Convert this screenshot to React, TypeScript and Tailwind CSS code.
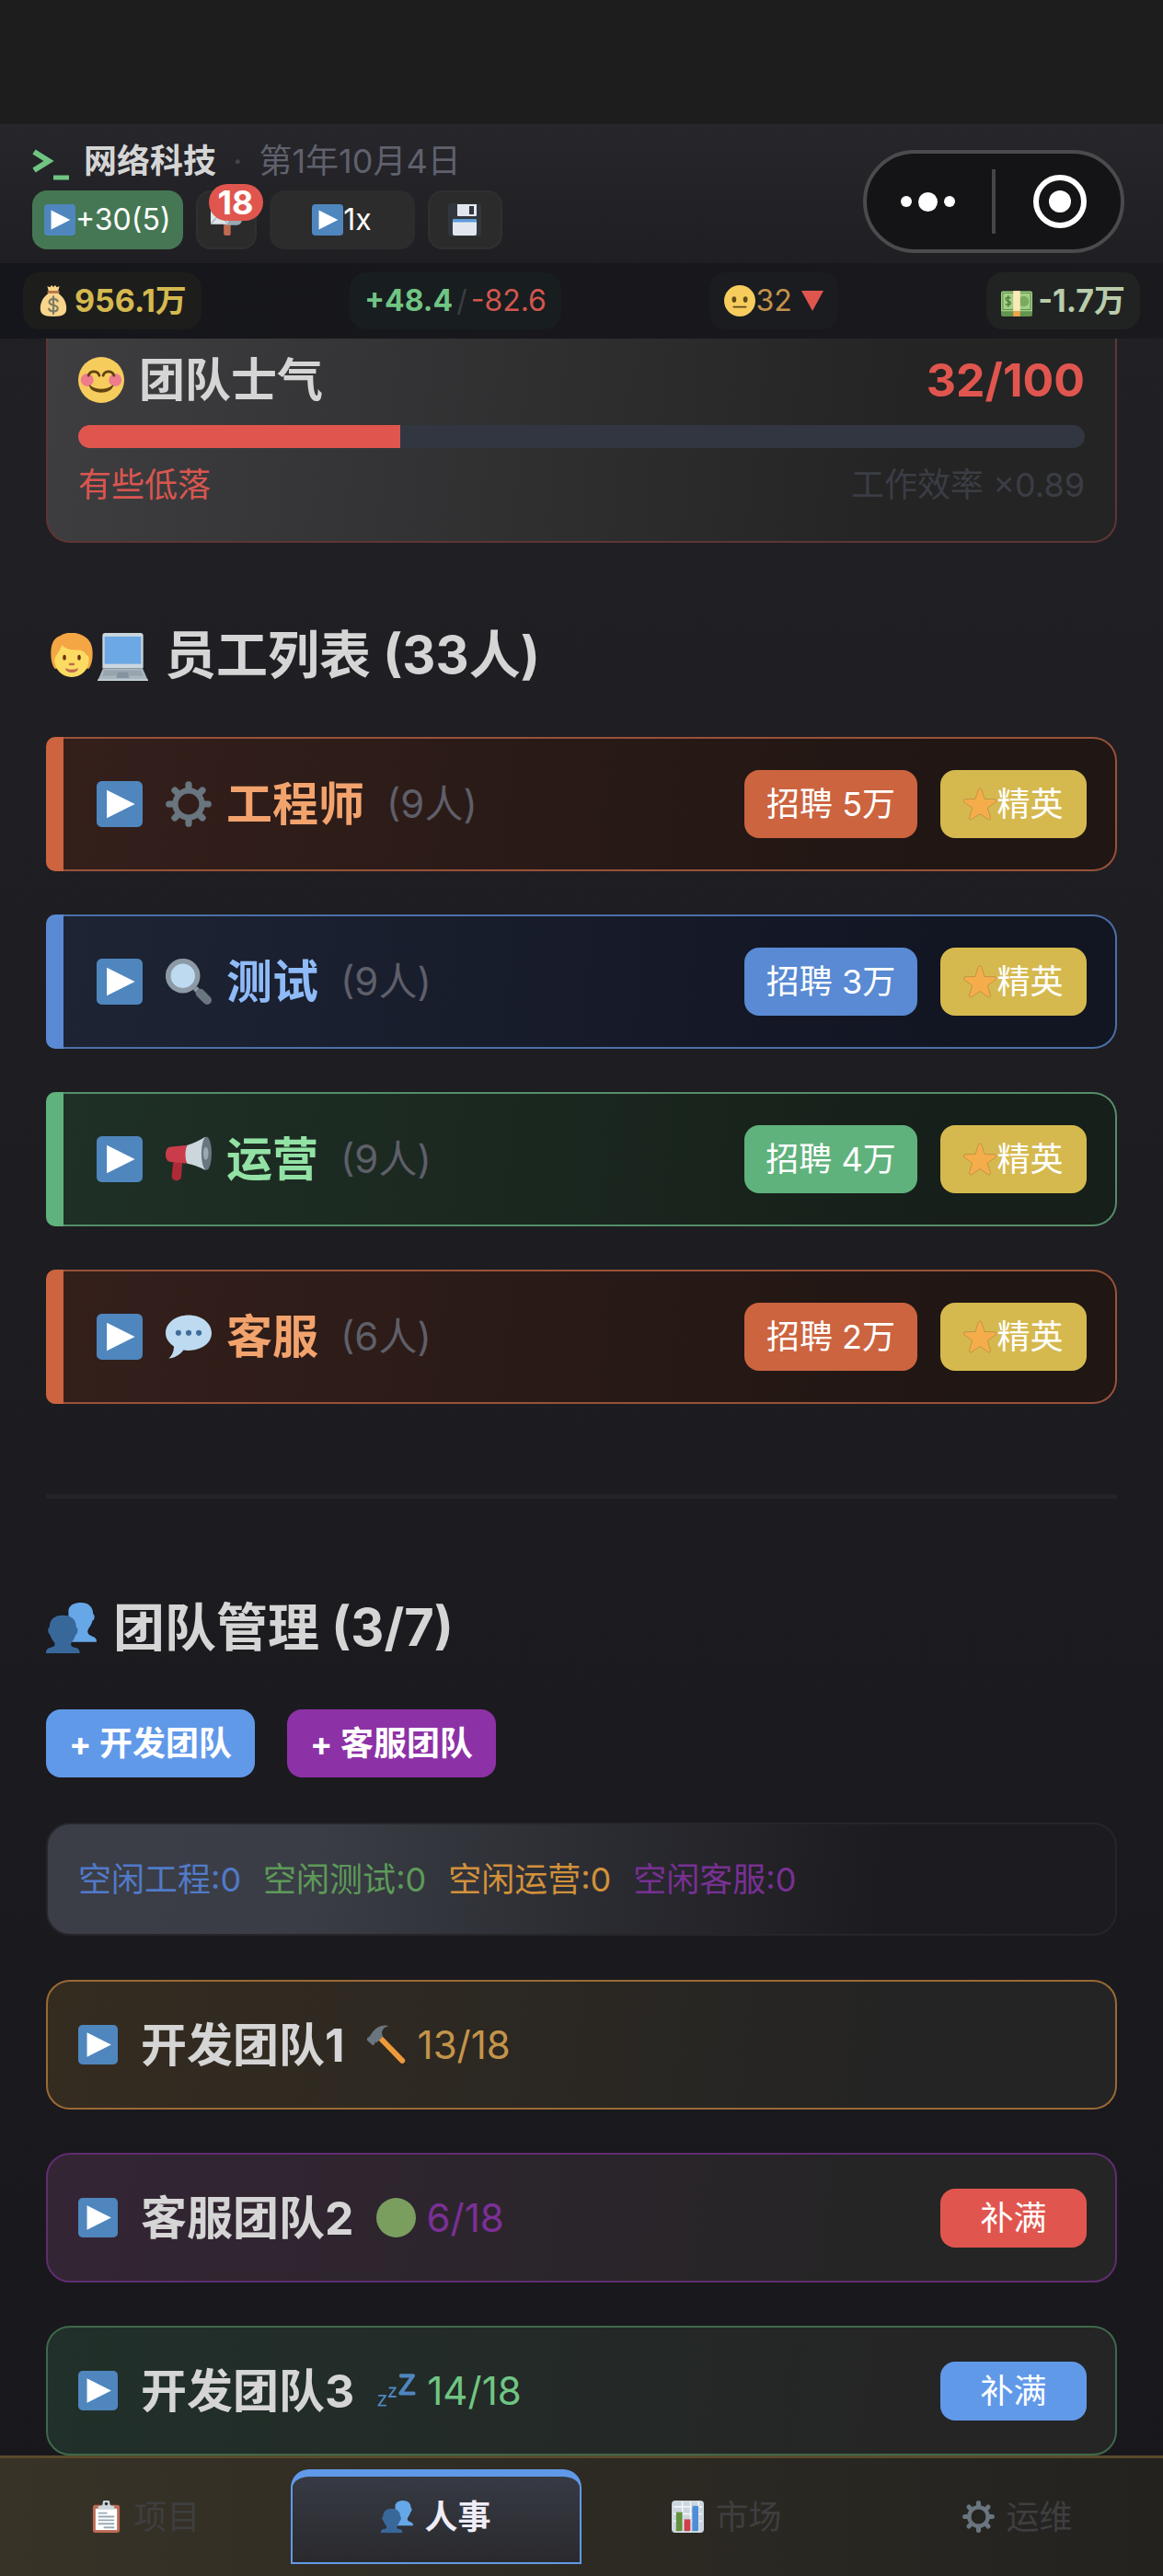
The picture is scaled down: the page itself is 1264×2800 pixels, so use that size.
import { useState } from "react";
import type { ReactNode } from "react";

type IconProps = { className?: string };

function Svg({ className, children }: { className?: string; children: ReactNode }) {
  return (
    <svg viewBox="0 0 36 36" aria-hidden="true" className={["shrink-0", className].join(" ")}>
      {children}
    </svg>
  );
}

function PlayIcon({ className }: IconProps) {
  return (
    <Svg className={className}>
      <rect width="36" height="36" rx="4" fill="#4f86be" />
      <path d="M8 7l22 11L8 29z" fill="#fff" />
    </Svg>
  );
}

function MailboxIcon({ className }: IconProps) {
  return (
    <Svg className={className}>
      <path d="M15 22h8v12a2 2 0 0 1-2 2h-4a2 2 0 0 1-2-2z" fill="#c1694f" />
      <rect x="14" y="8" width="22" height="16" rx="6" fill="#99aab5" />
      <rect x="0" y="7" width="20" height="16" rx="1" fill="#dfe4e8" />
      <path d="M0 8l10 9 10-9M0 23l7-8M20 23l-7-8" fill="none" stroke="#99aab5" strokeWidth="1.2" />
    </Svg>
  );
}

function FloppyIcon({ className }: IconProps) {
  return (
    <Svg className={className}>
      <path d="M4 0h28a4 4 0 0 1 4 4v28a4 4 0 0 1-4 4H4a4 4 0 0 1-4-4V4a4 4 0 0 1 4-4z" fill="#31373d" />
      <path d="M10 1h21v12a1 1 0 0 1-1 1H11a1 1 0 0 1-1-1z" fill="#e1e8ed" />
      <rect x="23" y="3" width="5" height="9" fill="#31373d" />
      <path d="M5 19a2 2 0 0 1 2-2h22a2 2 0 0 1 2 2v14a2 2 0 0 1-2 2H7a2 2 0 0 1-2-2z" fill="#e1e8ed" />
      <path d="M5 19a2 2 0 0 1 2-2h22a2 2 0 0 1 2 2v1.500H5z" fill="#5d9bdb" />
    </Svg>
  );
}

function MoneyBagIcon({ className }: IconProps) {
  return (
    <Svg className={className}>
      <path d="M11 1l3 1.500L16 0l2 2 2-2 2 2.500L25 1l-1.500 6h-11z" fill="#f9d58c" />
      <path d="M12 9.500C6 14 3 20 3 26.500 3 33 6 36 18 36s15-3 15-9.500C33 20 30 14 24 9.500z" fill="#f9d58c" />
      <rect x="11" y="6.500" width="14" height="3" rx="1.500" fill="#be7a4a" />
      <path
        d="M23 18.500c-1-2-3-2.700-5-2.700-2.700 0-4.700 1.400-4.700 3.500 0 5 9.700 2.400 9.700 7.200 0 2.200-2.100 3.700-5 3.700-2.500 0-4.500-1-5.200-3M18 13v20"
        fill="none"
        stroke="#7d7a63"
        strokeWidth="2.300"
        strokeLinecap="round"
      />
    </Svg>
  );
}

function NeutralFaceIcon({ className }: IconProps) {
  return (
    <Svg className={className}>
      <circle cx="18" cy="18" r="18" fill="#f6cc5d" />
      <ellipse cx="11.500" cy="16.500" rx="2.500" ry="3.500" fill="#5f4a17" />
      <ellipse cx="24.500" cy="16.500" rx="2.500" ry="3.500" fill="#5f4a17" />
      <path d="M11 25h14" stroke="#5f4a17" strokeWidth="2" strokeLinecap="round" />
    </Svg>
  );
}

function CashIcon({ className }: IconProps) {
  return (
    <Svg className={className}>
      <path d="M0 28h36v6a2 2 0 0 1-2 2H2a2 2 0 0 1-2-2z" fill="#639450" />
      <path d="M0 9a2 2 0 0 1 2-2h32a2 2 0 0 1 2 2v21H0z" fill="#a3cf86" />
      <path d="M2 9h32v19H2z" fill="none" stroke="#639450" strokeWidth="1.200" />
      <circle cx="26" cy="18.500" r="6" fill="#7aaa5c" />
      <path
        d="M11 15c-1-1.500-5.500-1.500-5.500 1 0 3 5.500 1.500 5.500 4.500 0 2.600-4.500 2.600-5.700 1M8.200 12v13"
        fill="none"
        stroke="#4f7d3c"
        strokeWidth="1.500"
      />
      <path d="M14 6.500h8V30h-8z" fill="#fbe9b8" />
      <path d="M14 30h8v6h-8z" fill="#f0a545" />
    </Svg>
  );
}

function BlushIcon({ className }: IconProps) {
  return (
    <Svg className={className}>
      <circle cx="18" cy="18" r="18" fill="#f6cc5d" />
      <circle cx="7" cy="18" r="5" fill="#ee7c8d" />
      <circle cx="29" cy="18" r="5" fill="#ee7c8d" />
      <path
        d="M8 14.500c1.500-4 7-4 8.500 0M19.500 14.500c1.500-4 7-4 8.500 0"
        fill="none"
        stroke="#5f4210"
        strokeWidth="2"
        strokeLinecap="round"
      />
      <path d="M9 22.500c4.500 4 13.500 4 18 0-2 6.500-16 6.500-18 0z" fill="#5f4210" stroke="#5f4210" strokeLinejoin="round" />
    </Svg>
  );
}

function PersonIcon({ className }: IconProps) {
  return (
    <Svg className={className}>
      <path d="M1 17C1 9 3 4 9 2c5-3 12-3 18 0 6 3 8 8 8 15 0 5-1 9-3 12H4c-2-3-3-7-3-12z" fill="#f4a645" />
      <path d="M4 22c0-3 4-6 6-12 4 4 9 4 14 4 3 0 5 2 6 4 2 0 2 3 2 4 0 8-6 14-14 14S4 30 4 22z" fill="#fbdb61" />
      <ellipse cx="12" cy="20" rx="1.300" ry="2.200" fill="#6a2d12" />
      <ellipse cx="24" cy="20" rx="1.300" ry="2.200" fill="#6a2d12" />
      <path d="M16.500 25.500h3" stroke="#c1694f" strokeWidth="1.800" strokeLinecap="round" />
      <path d="M13.500 29.500c2 1 7 1 9 0-1 3-8 3-9 0z" fill="#c1694f" stroke="#c1694f" />
    </Svg>
  );
}

function LaptopIcon({ className }: IconProps) {
  return (
    <Svg className={className}>
      <path d="M3.500 4a2 2 0 0 1 2-2h25a2 2 0 0 1 2 2v23h-29z" fill="#ccd6dd" />
      <rect x="5" y="4.500" width="26" height="19.500" fill="#6ca8e4" />
      <path d="M4 27h28l4 9H0z" fill="#aab6bf" />
      <path d="M0 35h36v1H0z" fill="#ccd6dd" />
      <path d="M5 28.500h26l1.500 4h-29z" fill="#98a5af" />
      <path d="M14.500 30h7l1 4h-9z" fill="#8593a0" />
    </Svg>
  );
}

const GEAR_ANGLES = [0, 45, 90, 135];

function GearIcon({ className }: IconProps) {
  return (
    <Svg className={className}>
      <circle cx="18" cy="18" r="10.500" fill="none" stroke="#69757f" strokeWidth="4.500" />
      {GEAR_ANGLES.map((angle) => (
        <path
          key={angle}
          d="M18 2.700V7M18 29v4.300"
          stroke="#69757f"
          strokeWidth="5.200"
          strokeLinecap="round"
          transform={`rotate(${angle} 18 18)`}
        />
      ))}
    </Svg>
  );
}

function MagnifierIcon({ className }: IconProps) {
  return (
    <Svg className={className}>
      <path d="M23 23l4 4" stroke="#8d9aa5" strokeWidth="4" />
      <path d="M27 27l5.500 5.500" stroke="#69757f" strokeWidth="7" strokeLinecap="round" />
      <circle cx="13.500" cy="13.500" r="11.500" fill="#bddaf0" stroke="#8d9aa5" strokeWidth="4" />
    </Svg>
  );
}

function MegaphoneIcon({ className }: IconProps) {
  return (
    <Svg className={className}>
      <path d="M6 20h7l-.700 11.500a3.800 3.800 0 0 1-7.500 0z" fill="#af2a39" />
      <path d="M3 8.500L17 7v14.500L3 20c-4-1-4-10.500 0-11.500z" fill="#cb3c4b" />
      <path d="M17 7c4-1 9-3.500 14-6.500v26C26 24 21 22 17 21.500c-2-3-2-11.500 0-14.500z" fill="#ccd6dd" />
      <ellipse cx="32" cy="13.500" rx="4" ry="13" fill="#69757f" />
      <ellipse cx="31.500" cy="13.500" rx="2" ry="5" fill="#99aab5" />
    </Svg>
  );
}

function SpeechIcon({ className }: IconProps) {
  return (
    <Svg className={className}>
      <path d="M18 1C8 1 0 7 0 15c0 4.500 2.500 8 6.500 10.500 0 4-1.500 7-4 9.500 4 0 9-3 11.500-6.500 13 1.500 22-5 22-13.500C36 7 28 1 18 1z" fill="#bddaf0" />
      <circle cx="10" cy="15" r="2.200" fill="#3f6c9b" />
      <circle cx="18" cy="15" r="2.200" fill="#3f6c9b" />
      <circle cx="26" cy="15" r="2.200" fill="#3f6c9b" />
    </Svg>
  );
}

function StarIcon({ className }: IconProps) {
  return (
    <Svg className={className}>
      <path
        d="M16.300 2c.6-1.500 2.800-1.500 3.400 0L23 12.500l11 .2c1.700.1 2.300 2.100 1 3.200l-8.700 6.300 3.200 10.500c.5 1.700-1.200 2.900-2.600 1.900L18 28.500l-8.900 6.100c-1.400 1-3.100-.2-2.600-1.900l3.200-10.500L1 15.900c-1.300-1.100-.7-3.100 1-3.200l11-.2z"
        fill="#f5ad4c"
        stroke="#a98139"
        strokeWidth="0.600"
      />
    </Svg>
  );
}

function PeopleIcon({ className }: IconProps) {
  return (
    <Svg className={className}>
      <path
        d="M25 0c5 0 8.500 3 8.500 8 1.300.5 1.500 4-.5 5-.5 2.500-2 4.500-3 6-1 2.500 0 4 3 5 2.500.8 3 2 3 4H16V5c1-3.500 4.500-5 9-5z"
        fill="#66a7e8"
      />
      <path
        d="M12 9c6 0 9.500 3 9.500 8.500 1.500.5 1.500 4.500-.5 5.500-.5 2.500-2 4-3 5.500-.7 2.500.5 3 3 3.500 2.500.5 3 2 3 4H0c0-2 .5-3.500 3-4s4-1 3-3.500c-1-1.500-2.500-3-3-5.500-2-1-2-5-.5-5.500C2.500 12 6 9 12 9z"
        fill="#38689a"
      />
    </Svg>
  );
}

function HammerIcon({ className }: IconProps) {
  return (
    <Svg className={className}>
      <path d="M13 13l19 19.500" stroke="#ee9a3b" strokeWidth="5" strokeLinecap="round" />
      <path d="M0 12c2-1 2.500-1.500 4-4 3-5 9-9 16-7-4 .5-6.500 3-6.500 6.500 0 1.500 1 2.500.5 3.500l-5 5c-1-.5-2-.5-2 1 0 1-1.500 2-2.500 1L0 14c-.5-.6-.5-1.500 0-2z" fill="#69757f" />
    </Svg>
  );
}

function GreenDotIcon({ className }: IconProps) {
  return (
    <Svg className={className}>
      <circle cx="18" cy="18" r="18" fill="#7a9e5e" />
    </Svg>
  );
}

function SleepIcon({ className }: IconProps) {
  return (
    <Svg className={className}>
      <g fill="none" stroke="#4f86be" strokeLinecap="round" strokeLinejoin="round">
        <path d="M22.500 4.500h11l-11.500 16h12" strokeWidth="3.400" />
        <path d="M12 15.500h5.500l-6 8h6" strokeWidth="1.600" />
        <path d="M2.500 22.500h6l-6.500 9h6.500" strokeWidth="1.600" />
      </g>
    </Svg>
  );
}

function ClipboardIcon({ className }: IconProps) {
  return (
    <Svg className={className}>
      <rect x="3" y="5" width="30" height="31" rx="2.500" fill="#bd6a52" />
      <rect x="6" y="9" width="24" height="24" fill="#fff" />
      <path d="M9 6c4 0 5-1 5-3a4 4 0 0 1 8 0c0 2 1 3 5 3v4H9z" fill="#ccd6dd" />
      <circle cx="18" cy="3.500" r="1.800" fill="#292f33" />
      <path d="M9 14h10M9 18h18M9 22h18M9 26h18M15 30h12" stroke="#99aab5" strokeWidth="2" />
    </Svg>
  );
}

function ChartIcon({ className }: IconProps) {
  return (
    <Svg className={className}>
      <rect width="36" height="36" rx="4" fill="#ccd6dd" />
      <path d="M2 7h32M2 15h32M2 23h32M12 1v34M21 1v34M30 1v34" stroke="#f5f8fa" strokeWidth="1.500" />
      <rect x="5" y="13" width="7" height="21" fill="#64913f" />
      <rect x="14" y="21" width="7" height="13" fill="#cf3f4c" />
      <rect x="23" y="6" width="7" height="28" fill="#4f8ed6" />
    </Svg>
  );
}

const GROUPS = [
  {
    name: "工程师",
    count: 9,
    cost: "5万",
    icon: GearIcon,
    bar: "bg-[#cb643f]",
    box: "border-[#98523a] bg-[linear-gradient(97deg,#341f1b,#201613_85%)]",
    text: "text-[#f2a36d]",
    button: "bg-[#cb643f]",
  },
  {
    name: "测试",
    count: 9,
    cost: "3万",
    icon: MagnifierIcon,
    bar: "bg-[#598ad3]",
    box: "border-[#4b70a8] bg-[linear-gradient(97deg,#1d2434,#121522_85%)]",
    text: "text-[#8fbaf8]",
    button: "bg-[#598ad3]",
  },
  {
    name: "运营",
    count: 9,
    cost: "4万",
    icon: MegaphoneIcon,
    bar: "bg-[#60b27d]",
    box: "border-[#558d69] bg-[linear-gradient(97deg,#1f3026,#161f19_85%)]",
    text: "text-[#92e2a5]",
    button: "bg-[#60b27d]",
  },
  {
    name: "客服",
    count: 6,
    cost: "2万",
    icon: SpeechIcon,
    bar: "bg-[#cb643f]",
    box: "border-[#98523a] bg-[linear-gradient(97deg,#341f1b,#201613_85%)]",
    text: "text-[#f2a36d]",
    button: "bg-[#cb643f]",
  },
];

const IDLE = [
  { label: "空闲工程", count: 0, color: "text-[#517ac8]" },
  { label: "空闲测试", count: 0, color: "text-[#5d9a59]" },
  { label: "空闲运营", count: 0, color: "text-[#d2913a]" },
  { label: "空闲客服", count: 0, color: "text-[#783093]" },
];

const TEAMS = [
  {
    name: "开发团队1",
    size: "13/18",
    icon: HammerIcon,
    box: "border-[#996a35] bg-[linear-gradient(97deg,#352c20,#242424_80%)]",
    text: "text-[#c4944a]",
    fill: "",
  },
  {
    name: "客服团队2",
    size: "6/18",
    icon: GreenDotIcon,
    box: "border-[#5f2d70] bg-[linear-gradient(97deg,#342535,#252525_80%)]",
    text: "text-[#7b3096]",
    fill: "bg-[#e0564f]",
  },
  {
    name: "开发团队3",
    size: "14/18",
    icon: SleepIcon,
    box: "border-[#3f694b] bg-[linear-gradient(97deg,#21302a,#252525_80%)]",
    text: "text-[#70c583]",
    fill: "bg-[#6199e9]",
  },
];

const TABS = [
  { label: "项目", icon: ClipboardIcon },
  { label: "人事", icon: PeopleIcon },
  { label: "市场", icon: ChartIcon },
  { label: "运维", icon: GearIcon },
];

const MORALE = 32;

export default function App() {
  const [tab, setTab] = useState("人事");

  return (
    <div className="flex min-h-screen flex-col bg-linear-to-b from-[#222126] to-[#18171b] font-['Inter','Noto_Sans_CJK_SC',sans-serif] text-[36px] leading-[48px] text-[#d5d5d5]">
      {/* Space under the phone's status bar */}
      <div className="h-[135px] bg-[#1d1d1d]" />

      <header className="flex items-end justify-between bg-linear-to-b from-[#26262b] to-[#1f1f23] pt-4 pr-[42px] pb-[11px] pl-[35px]">
        <div className="pb-1">
          <div className="flex items-center">
            <svg viewBox="0 0 42 42" className="mr-[14px] size-[42px]" aria-hidden="true">
              <path d="M2 11l16 10L2 31" fill="none" stroke="#70c583" strokeWidth="6" />
              <path d="M23 39h17" stroke="#70c583" strokeWidth="5" />
            </svg>
            <span className="font-bold">网络科技</span>
            <span className="mx-[18px] text-[#45464d]">·</span>
            <span className="text-[#60616d]">第1年10月4日</span>
          </div>
          <div className="mt-2 flex gap-[14px] text-[32px] text-white">
            <button className="flex h-16 items-center rounded-2xl bg-[#457754] px-[13px]">
              <PlayIcon className="size-[34px]" />
              +30(5)
            </button>
            <button
              aria-label="邮箱"
              className="relative flex h-16 w-[66px] items-center justify-center rounded-2xl border-2 border-[#303031] bg-[#2b2b2c]"
            >
              <MailboxIcon className="size-[34px]" />
              <span className="absolute -top-[9px] left-3 h-10 rounded-[20px] bg-[#e0564f] px-[10px] text-[36px] leading-10 font-bold">
                18
              </span>
            </button>
            <button className="flex h-16 w-[158px] items-center justify-center rounded-2xl bg-[#2c2c2d]">
              <PlayIcon className="size-[34px]" />
              1x
            </button>
            <button
              aria-label="保存"
              className="flex h-16 w-[81px] items-center justify-center rounded-2xl border-2 border-[#303031] bg-[#2b2b2c]"
            >
              <FloppyIcon className="size-9" />
            </button>
          </div>
        </div>

        <div className="flex h-28 w-[284px] items-center rounded-full border-4 border-[#4b4b4d] bg-[#141416]">
          <button aria-label="更多" className="flex flex-1 items-center justify-center gap-[7px] pr-1">
            <span className="size-3 rounded-full bg-white" />
            <span className="size-[21px] rounded-full bg-white" />
            <span className="size-3 rounded-full bg-white" />
          </button>
          <span className="h-[70px] w-1 bg-[#454547]" />
          <button aria-label="关闭" className="flex flex-1 justify-center pl-1">
            <span className="flex size-[58px] items-center justify-center rounded-full border-[6px] border-white">
              <span className="size-6 rounded-full bg-white" />
            </span>
          </button>
        </div>
      </header>

      <div className="flex items-center justify-between bg-linear-to-r from-[#15161b] to-[#1a191d] px-[25px] py-[10px] text-[32px]">
        <div className="flex h-[62px] items-center gap-[6px] rounded-[18px] bg-[#1d1d1c] px-4 text-[34px] font-bold text-[#d5b94f]">
          <MoneyBagIcon className="size-[34px]" />
          956.1万
        </div>
        <div className="flex h-[62px] items-center gap-1 rounded-[18px] bg-[#181d1f] px-4">
          <span className="font-bold text-[#70c583]">+48.4</span>
          <span className="text-[#3a3d41]">/</span>
          <span className="text-[#d3564f]">-82.6</span>
        </div>
        <div className="flex h-[62px] items-center rounded-[18px] bg-[#1b1c20] px-4 text-[#c4944a]">
          <NeutralFaceIcon className="size-[34px]" />
          32
          <svg viewBox="0 0 24 22" className="ml-[10px] h-[22px] w-6" aria-hidden="true">
            <path d="M0 0h24L12 22z" fill="#e0564f" />
          </svg>
        </div>
        <div className="flex h-[62px] items-center gap-[6px] rounded-[18px] bg-[#202322] px-4 text-[34px] font-bold text-[#b9ccab]">
          <CashIcon className="size-[34px]" />
          -1.7万
        </div>
      </div>

      <main className="flex-1 px-[50px]">
        <section className="rounded-b-[26px] border-2 border-t-0 border-[#5f3634] bg-[linear-gradient(97deg,#3e3e41,#242424_80%)] px-[33px] pt-5 pb-[37px]">
          <div className="flex items-center text-[50px] leading-[50px] font-bold">
            <BlushIcon className="mr-4 size-[50px]" />
            <h2>团队士气</h2>
            <span className="ml-auto text-[#e0564f]">{MORALE}/100</span>
          </div>
          <div className="mt-6 h-[25px] overflow-hidden rounded-full bg-[#323641]">
            <div className="h-full bg-[#e0564f]" style={{ width: `${MORALE}%` }} />
          </div>
          <div className="mt-4 flex justify-between">
            <span className="text-[#d9564f]">有些低落</span>
            <span className="text-[#3b3d45]">工作效率 ×0.89</span>
          </div>
        </section>

        <h2 className="mt-[90px] mb-[57px] flex items-center text-[56px] leading-[64px] font-bold">
          <PersonIcon className="ml-1 size-12" />
          <LaptopIcon className="mr-[18px] ml-1 size-[55px]" />
          员工列表 (33人)
        </h2>

        <ul className="flex flex-col gap-[47px]">
          {GROUPS.map((group) => (
            <li key={group.name} className="flex">
              <div className={["w-[19px] rounded-l-[10px]", group.bar].join(" ")} />
              <div
                className={[
                  "flex flex-1 items-center rounded-r-[26px] border-y-2 border-r-2 py-[34px] pr-[31px] pl-9",
                  group.box,
                ].join(" ")}
              >
                <button aria-label={`展开${group.name}`}>
                  <PlayIcon className="size-[50px]" />
                </button>
                <group.icon className="mr-4 ml-[25px] size-[50px]" />
                <span className={["text-[50px] font-bold", group.text].join(" ")}>{group.name}</span>
                <span className="ml-6 text-[42px] text-[#5e5f69]">({group.count}人)</span>
                <button className={["ml-auto h-[74px] w-[188px] rounded-2xl text-white", group.button].join(" ")}>
                  招聘 {group.cost}
                </button>
                <button className="ml-[25px] flex h-[74px] w-[159px] items-center justify-center rounded-2xl bg-[#d5b94f] text-white">
                  <StarIcon className="size-9" />
                  精英
                </button>
              </div>
            </li>
          ))}
        </ul>

        <hr className="mt-[98px] border-t-[5px] border-[#242427]" />

        <h2 className="mt-[108px] mb-[57px] flex items-center text-[56px] leading-[64px] font-bold">
          <PeopleIcon className="mr-[18px] size-[55px]" />
          团队管理 (3/7)
        </h2>

        <div className="flex gap-[35px] font-bold text-white">
          <button className="h-[74px] w-[227px] rounded-2xl bg-[#6199e9]">+ 开发团队</button>
          <button className="h-[74px] w-[227px] rounded-2xl bg-[#8d31a6]">+ 客服团队</button>
        </div>

        <div className="mt-[49px] flex h-[123px] items-center gap-6 rounded-[26px] border-2 border-[#26262a] bg-[linear-gradient(97deg,#3c3e47,#3a3d45_25%,#1c1b1f_78%)] px-[33px]">
          {IDLE.map((item) => (
            <span key={item.label} className={item.color}>
              {item.label}:{item.count}
            </span>
          ))}
        </div>

        <ul className="mt-12 flex flex-col gap-[47px]">
          {TEAMS.map((team) => (
            <li
              key={team.name}
              className={["flex min-h-[141px] items-center rounded-[26px] border-2 pr-[31px] pl-[33px]", team.box].join(" ")}
            >
              <button aria-label={`展开${team.name}`}>
                <PlayIcon className="size-[43px]" />
              </button>
              <span className="ml-[25px] text-[50px] font-bold">{team.name}</span>
              <team.icon className="mr-3 ml-6 size-[43px]" />
              <span className={["text-[42px]", team.text].join(" ")}>{team.size}</span>
              {team.fill && (
                <button className={["ml-auto h-16 w-[159px] rounded-2xl text-white", team.fill].join(" ")}>补满</button>
              )}
            </li>
          ))}
        </ul>
      </main>

      <nav className="grid grid-cols-4 border-t-[3px] border-[#5a4b2d] bg-linear-to-r from-[#383327] to-[#23221f] pt-3 pb-[13px]">
        {TABS.map((item) => {
          const active = item.label === tab;
          return (
            <button
              key={item.label}
              onClick={() => setTab(item.label)}
              className={[
                "flex h-[103px] items-center justify-center gap-3",
                active
                  ? "rounded-t-[20px] border-2 border-t-8 border-[#6199e9] bg-linear-to-b from-[#373a44] to-[#2a2a2e] pb-[6px] font-bold text-[#eeecf8]"
                  : "text-[#3f3e40]",
              ].join(" ")}
            >
              <item.icon className="size-[35px]" />
              {item.label}
            </button>
          );
        })}
      </nav>
    </div>
  );
}
